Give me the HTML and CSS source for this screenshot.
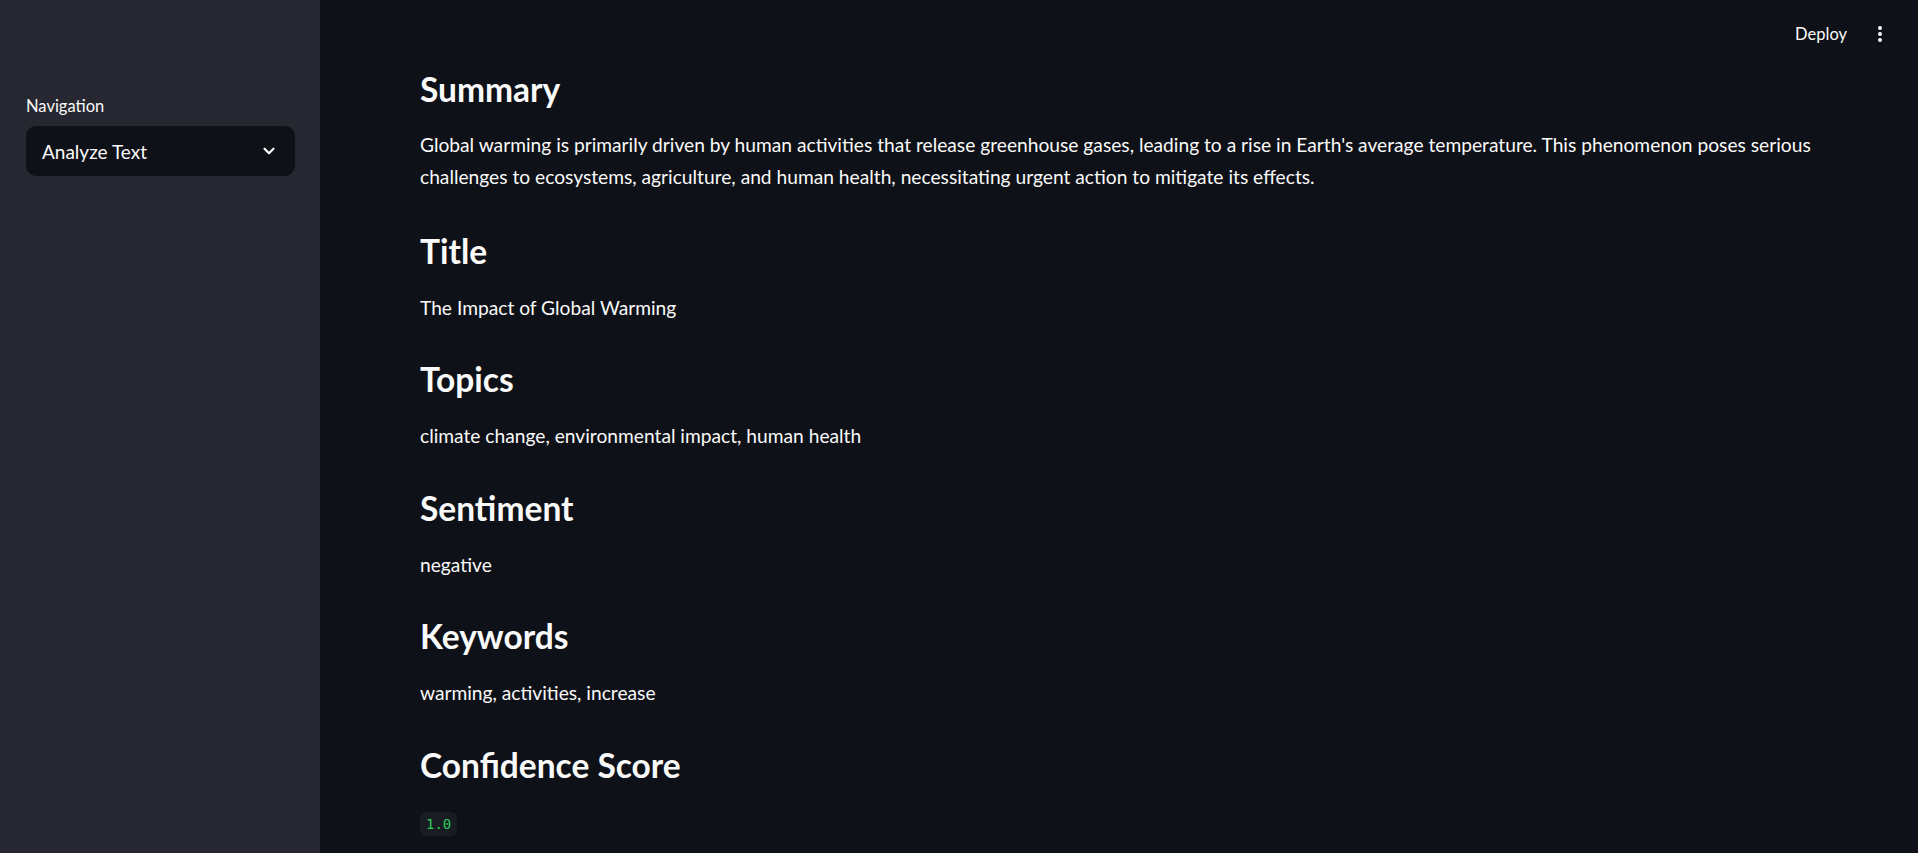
FILE: index.html
```html
<!DOCTYPE html>
<html lang="en">
<head>
<meta charset="utf-8">
<title>Analyze Text</title>
<link rel="stylesheet" href="styles.css">
</head>
<body>
<div class="app">
  <aside class="sidebar">
    <div class="widget">
      <label class="widget-label">Navigation</label>
      <div class="select">
        <span class="select-value">Analyze Text</span>
        <svg class="chevron" width="16" height="16" viewBox="0 0 16 16"><path d="M3.5 5.75 L8 10.25 L12.5 5.75" fill="none" stroke="#fafafa" stroke-width="2.2" stroke-linecap="round" stroke-linejoin="round"/></svg>
      </div>
    </div>
  </aside>
  <main class="main">
    <header class="toolbar">
      <span class="deploy">Deploy</span>
      <span class="menu"><i></i><i></i><i></i></span>
    </header>
    <div class="content">
      <section class="section">
        <h3 class="heading">Summary</h3>
        <p class="text">Global warming is primarily driven by human activities that release greenhouse gases, leading to a rise in Earth's average temperature. This phenomenon poses serious challenges to ecosystems, agriculture, and human health, necessitating urgent action to mitigate its effects.</p>
      </section>
      <section class="section">
        <h3 class="heading">Title</h3>
        <p class="text">The Impact of Global Warming</p>
      </section>
      <section class="section">
        <h3 class="heading">Topics</h3>
        <p class="text">climate change, environmental impact, human health</p>
      </section>
      <section class="section">
        <h3 class="heading">Sentiment</h3>
        <p class="text">negative</p>
      </section>
      <section class="section">
        <h3 class="heading">Keywords</h3>
        <p class="text">warming, activities, increase</p>
      </section>
      <section class="section">
        <h3 class="heading">Confidence Score</h3>
        <p class="text"><code class="code">1.0</code></p>
      </section>
    </div>
  </main>
</div>
</body>
</html>
```

FILE: styles.css
```css
* { box-sizing: border-box; }
html, body {
  margin: 0;
  padding: 0;
  height: 100%;
  overflow: hidden;
  background: #0e1117;
}
body {
  font-family: "Lato", "Noto Sans", sans-serif;
  color: #fafafa;
}
.app {
  display: grid;
  grid-template-columns: 320px 1fr;
  height: 100vh;
}
.sidebar {
  background: #262730;
  padding: 94px 25px 0 26px;
}
.widget {
  display: flex;
  flex-direction: column;
  gap: 8px;
}
.widget-label {
  font-size: 16.5px;
  line-height: 24px;
}
.select {
  height: 50px;
  background: #0e1117;
  border-radius: 10px;
  display: flex;
  align-items: center;
  justify-content: space-between;
  padding: 0 18px 0 16px;
}
.select-value {
  font-size: 19px;
}
.chevron { display: block; }
.main {
  display: flex;
  flex-direction: column;
  min-width: 0;
}
.toolbar {
  height: 68px;
  display: flex;
  align-items: center;
  justify-content: flex-end;
  padding-right: 36px;
  gap: 31px;
  flex-shrink: 0;
}
.deploy {
  font-size: 16.5px;
}
.menu {
  display: flex;
  flex-direction: column;
  gap: 2px;
}
.menu i {
  display: block;
  width: 4px;
  height: 4px;
  border-radius: 50%;
  background: #fafafa;
}
.content {
  padding: 0 100px 0 100px;
  display: flex;
  flex-direction: column;
  gap: 34.6px;
}
.section {
  display: flex;
  flex-direction: column;
  gap: 20px;
}
.section:first-child {
  gap: 19px;
}
.heading {
  margin: 0;
  font-size: 33.5px;
  line-height: 42px;
  font-weight: 700;
}
.text {
  margin: 0;
  font-size: 19.2px;
  line-height: 32px;
}
.section:first-child + .section {
  margin-top: 2px;
}
.code {
  font-family: "DejaVu Sans Mono", "Liberation Mono", monospace;
  font-size: 14px;
  color: #2ec95c;
  background: #1a1c23;
  border-radius: 6px;
  padding: 4px 6px;
}
```
